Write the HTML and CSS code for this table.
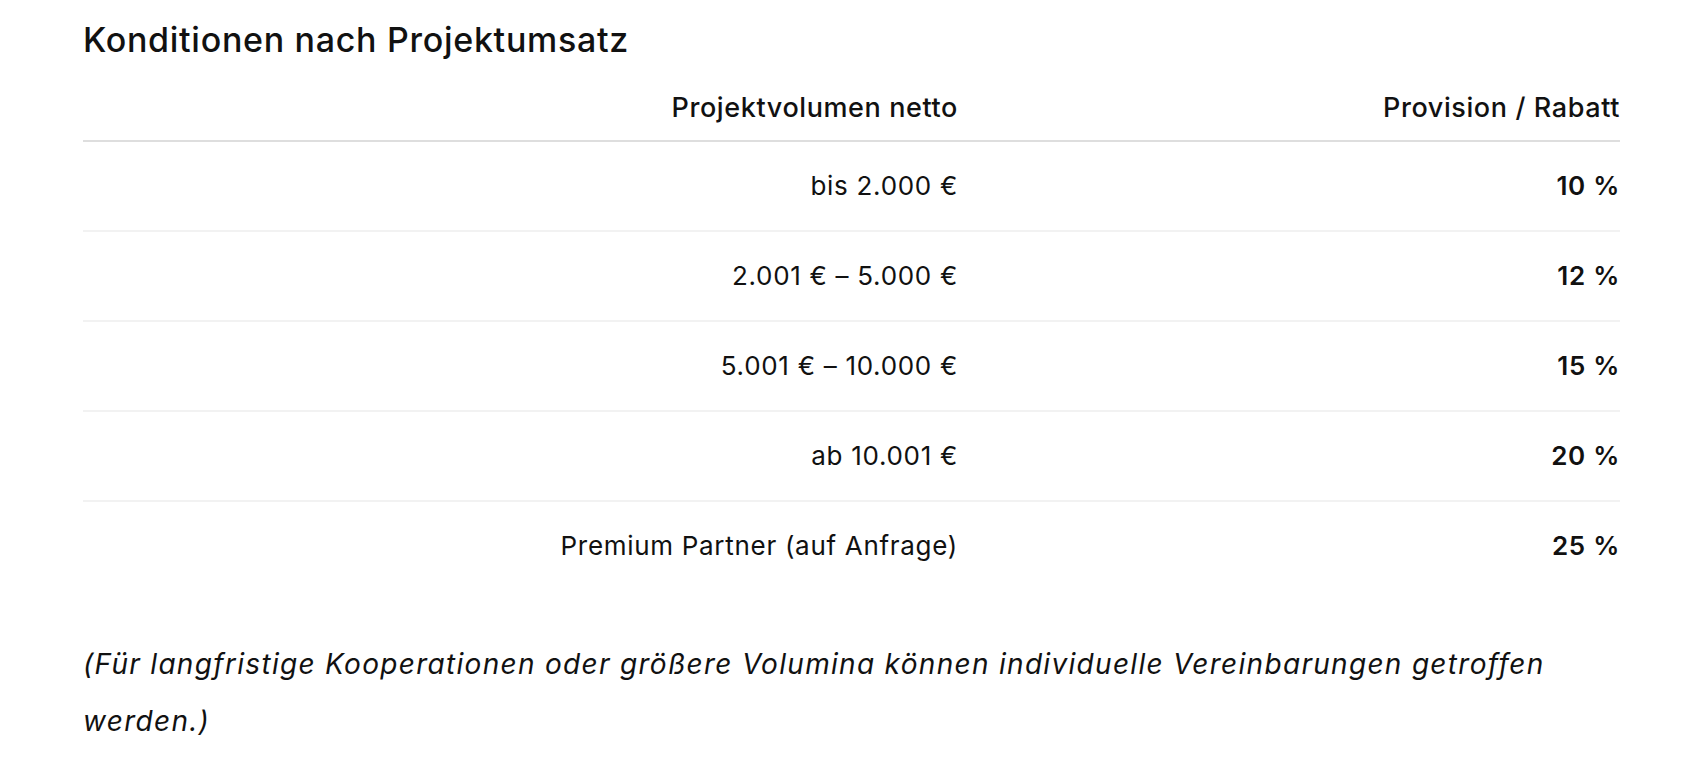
FILE: index.html
```html
<!DOCTYPE html>
<html lang="de">
<head>
<meta charset="utf-8">
<link rel="stylesheet" href="styles.css">
</head>
<body>
<main class="page">
  <h2 class="title">Konditionen nach Projektumsatz</h2>
  <table class="terms">
    <thead>
      <tr><th class="c1">Projektvolumen netto</th><th class="c2">Provision / Rabatt</th></tr>
    </thead>
    <tbody>
      <tr><td class="c1">bis 2.000 €</td><td class="c2"><strong>10 %</strong></td></tr>
      <tr><td class="c1">2.001 € – 5.000 €</td><td class="c2"><strong>12 %</strong></td></tr>
      <tr><td class="c1">5.001 € – 10.000 €</td><td class="c2"><strong>15 %</strong></td></tr>
      <tr><td class="c1">ab 10.001 €</td><td class="c2"><strong>20 %</strong></td></tr>
      <tr><td class="c1">Premium Partner (auf Anfrage)</td><td class="c2"><strong>25 %</strong></td></tr>
    </tbody>
  </table>
  <p class="note"><em>(Für langfristige Kooperationen oder größere Volumina können individuelle Vereinbarungen getroffen werden.)</em></p>
</main>
</body>
</html>
```
FILE: styles.css
```css
html, body { margin: 0; padding: 0; background: #fff; }
body { font-family: Inter, "Noto Sans", sans-serif; color: #111; }
.page { padding: 18px 72px 0 83px; }
.title { font-size: 34px; font-weight: 500; margin: 0; line-height: 44px; letter-spacing: 0.7px; }
.terms { width: 100%; border-collapse: collapse; margin-top: 30px; table-layout: fixed; }
.terms .c1 { width: 875px; text-align: right; }
.terms .c2 { text-align: right; }
.terms th { font-size: 27px; font-weight: 500; padding: 0 0 16px; border-bottom: 2px solid #dedede; line-height: 32px; letter-spacing: 0.6px; }
.terms td { font-size: 26px; font-weight: 400; height: 88px; padding: 0; border-bottom: 2px solid #f2f2f2; line-height: 32px; letter-spacing: 0.7px; }
.terms td strong { font-weight: 600; }
.terms tbody tr:last-child td { border-bottom: none; }
.note { font-size: 28px; line-height: 57px; margin: 46px 0 0; letter-spacing: 1.3px; }
```
